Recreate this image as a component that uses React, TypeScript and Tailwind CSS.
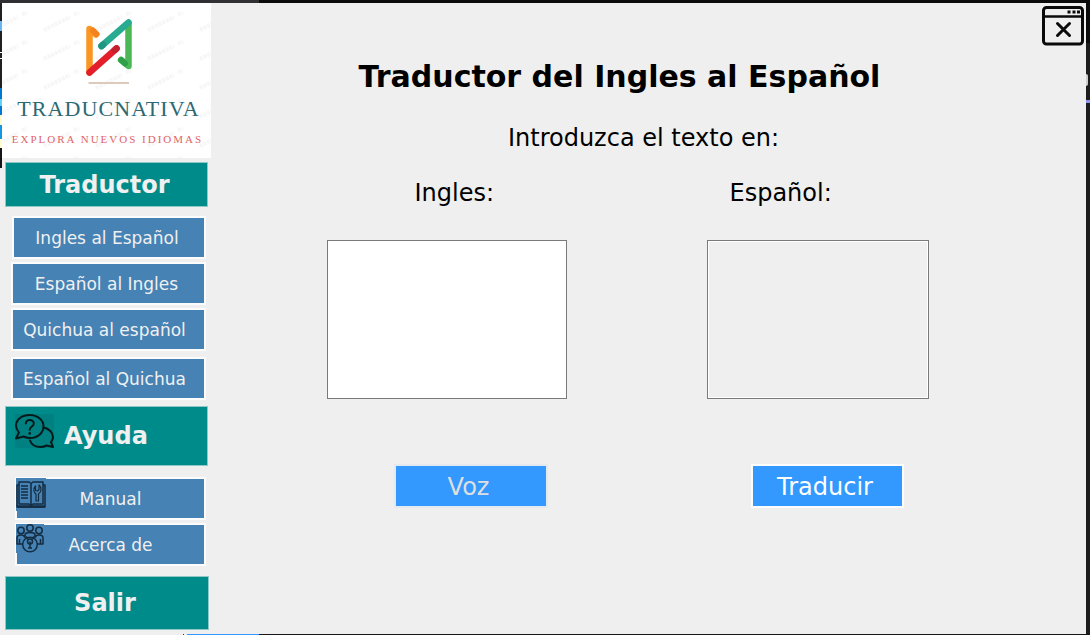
import React, { useState } from "react";

function BrandMark() {
  return (
    <svg viewBox="0 0 50 68" className="ml-[3px] h-[68px] w-[50px]" fill="none" strokeLinecap="round" strokeLinejoin="round" aria-hidden="true">
      <path d="M6.500 54.500V11L13 16.500" stroke="#fa9622" strokeWidth="6.500" />
      <path d="M10 12.500L13.500 16" stroke="#f5821f" strokeWidth="6" />
      <path d="M45.500 6V48L38 42" stroke="#4cb855" strokeWidth="6.500" />
      <path d="M38.500 42L42 45.500" stroke="#2fa049" strokeWidth="6" />
      <path d="M18.500 28L45.500 4.500" stroke="#29ab91" strokeWidth="6.500" />
      <path d="M18.500 28L20 26.700" stroke="#219680" strokeWidth="6.500" />
      <path d="M6.500 54.500L33.500 30.500" stroke="#e21f2b" strokeWidth="6.500" />
      <path d="M32 31.900L33.500 30.500" stroke="#c4202e" strokeWidth="6.500" />
      <path d="M5.500 65H46" stroke="#dccabd" strokeWidth="2" strokeLinecap="butt" />
    </svg>
  );
}

function Watermark() {
  return (
    <svg className="absolute inset-0 h-full w-full" aria-hidden="true">
      <defs>
        <pattern id="wm" width="52" height="29" patternUnits="userSpaceOnUse" x="38" y="4">
          <path d="M4 23L30 10M34 7l5-1" stroke="#000" strokeOpacity="0.03" strokeWidth="4" strokeDasharray="3 1" />
        </pattern>
      </defs>
      <rect width="100%" height="100%" fill="url(#wm)" />
    </svg>
  );
}

function HelpIcon() {
  return (
    <svg viewBox="0 0 39 34" className="h-[34px] w-[39px] shrink-0 bg-[#008080]" fill="none" stroke="#06191a" strokeWidth="2" strokeLinecap="round" strokeLinejoin="round" aria-hidden="true">
      <path d="M4 18.500C2 16 1 14 1 11.800C1 5.500 7 1 14.700 1S28.500 6 28.500 12.500S22.500 24 15 24C12.500 24 10.500 23.500 8.500 22.500L1 24.500Z" />
      <path d="M28.500 13.500C34 14.500 38 18.500 38 23C38 25 37.200 26.700 36 28.200L38 33L31.500 31.500C29.500 32.600 27.500 33 25.500 33C20.500 33 16.500 30.500 15 26.500" />
      <path d="M10.800 9.500C10.800 7.500 12.500 6 14.700 6C17 6 18.800 7.500 18.800 9.700C18.800 12.500 14.700 12.500 14.700 15.800" />
      <path d="M14.700 19.300V19.500" strokeWidth="2.500" />
    </svg>
  );
}

function ManualIcon() {
  return (
    <svg viewBox="0 0 30 33" className="h-[33px] w-[30px] bg-[#4682b4]" fill="none" stroke="#142d42" strokeWidth="1.500" strokeLinejoin="round" aria-hidden="true">
      <path d="M3 4H13L15 5.500L17 4H27V26H17L15 27.500L13 26H3ZM15 5.500V27" />
      <path d="M3 7H1V29H29V7H27" />
      <path d="M1 28.500H29" strokeWidth="2.500" />
      <path d="M5 8H12M5 11H12M5 14H12M5 17H12M5 20H12" />
      <path d="M20 23V16C17.500 14.500 17 11 19.500 8V12.500L21.500 13L23 11.500V7C26 9.500 25.500 14 22.500 16V23Z" strokeWidth="1.200" />
    </svg>
  );
}

function AboutIcon() {
  return (
    <svg viewBox="0 0 28 29" className="h-[29px] w-[28px] bg-[#4682b4]" fill="none" stroke="#142d42" strokeWidth="1.500" strokeLinejoin="round" aria-hidden="true">
      <circle cx="14" cy="4" r="3.200" />
      <circle cx="5" cy="6.500" r="3.200" />
      <circle cx="23" cy="6.500" r="3.200" />
      <path d="M9 14V11Q9 8.500 14 8.500T19 11V14M7 20H1V14Q1 11 5 11Q8 11 8.500 13M21 20H27V14Q27 11 23 11Q20 11 19.500 13M3.500 15V20M24.500 15V20" />
      <circle cx="14" cy="20.500" r="7.300" />
      <circle cx="14" cy="17.500" r="2.500" />
      <path d="M14 17.500V24M10 12.500L12 15M18 12.500L16 15M12 24H16" />
    </svg>
  );
}

function CloseWindowIcon() {
  return (
    <svg viewBox="0 0 42 40" className="h-10 w-[42px]" fill="none" stroke="#0a0a0a" aria-hidden="true">
      <rect x="1.500" y="1.500" width="39" height="36.500" rx="3" strokeWidth="3" />
      <path d="M1 10.500H41" strokeWidth="2.500" />
      <path d="M25.500 6H28.500M30.500 6H33.500M35 6H38" strokeWidth="3" />
      <path d="M15.500 17.500L27.500 29.500M27.500 17.500L15.500 29.500" strokeWidth="3" strokeLinecap="round" />
    </svg>
  );
}

const heading = "border border-[#8fc8c6] bg-[#008b8b] text-[24px] font-bold text-[#f0f0f0]";
const item = "relative h-[43px] border-2 border-[#fcfcfc] bg-[#4682b4] pt-0.5 text-[17px] text-[#f0f0f0]";

function Sidebar({ onPick }: { onPick: (name: string) => void }) {
  return (
    <aside className="flex w-[209px] shrink-0 flex-col">
      <div className="relative flex h-[155px] flex-col items-center bg-white font-['Liberation_Serif',serif]">
        <Watermark />
        <div className="relative mt-[15px] flex flex-col items-center">
          <BrandMark />
          <p className="mt-[9px] ml-1 text-[22px] leading-[28px] tracking-wider whitespace-nowrap text-[#2b6a74]">TRADUCNATIVA</p>
          <p className="mt-2 ml-0.5 text-[11px] leading-[16px] tracking-[2px] whitespace-nowrap text-[#df6468]">EXPLORA NUEVOS IDIOMAS</p>
        </div>
      </div>
      <nav className="flex flex-col pr-0.5 pl-[3px]" aria-label="Menú">
        <h2 className={`mt-1 mr-px h-[45px] pr-1 text-center leading-[45px] ${heading}`}>Traductor</h2>
        <div className="mt-[9px] flex flex-col gap-[3px] pr-[3px] pl-1.5">
          <button type="button" onClick={() => onPick("Ingles al Español")} className={`ml-px pr-1 ${item}`}>Ingles al Español</button>
          <button type="button" onClick={() => onPick("Español al Ingles")} className={`pr-1 ${item}`}>Español al Ingles</button>
          <button type="button" onClick={() => onPick("Quichua al español")} className={`pr-2 ${item}`}>Quichua al español</button>
          <button type="button" onClick={() => onPick("Español al Quichua")} className={`mt-[3px] pr-2 ${item}`}>Español al Quichua</button>
        </div>
        <h2 className={`mt-1.5 mr-px flex h-[60px] items-center gap-2.5 pl-[9px] ${heading}`}>
          <span className="pb-2.5"><HelpIcon /></span>
          Ayuda
        </h2>
        <div className="mt-[11px] flex flex-col gap-[3px] pr-[3px] pl-2.5">
          <button type="button" className={item}>
            <span className="absolute -top-px -left-px"><ManualIcon /></span>
            Manual
          </button>
          <button type="button" className={item}>
            <span className="absolute -top-px -left-px"><AboutIcon /></span>
            Acerca de
          </button>
        </div>
        <button type="button" className={`mt-2.5 h-[54px] pr-1 ${heading}`}>Salir</button>
      </nav>
    </aside>
  );
}

export default function App() {
  const [text, setText] = useState("");
  const [result, setResult] = useState("");
  const [pair, setPair] = useState("Ingles al Español");
  const [from, to] = pair.split(" al ");
  const action = "h-11 border-2 text-[24px] leading-[42px] bg-[#3399ff]";

  return (
    <div className="flex min-h-screen flex-col bg-[#efefef] font-['DejaVu_Sans',Verdana,sans-serif] text-black">
      <div className="flex h-[3px] bg-[#0b0b0b]">
        <div className="w-[259px] bg-[#303033]" />
      </div>
      <div className="flex grow">
        <div className="flex w-0.5 shrink-0 flex-col">
          <div className="h-[18px] bg-[#202023]" />
          <div className="h-2.5 bg-[#68b5f6]" />
          <div className="h-[21px] bg-[#202023]" />
          <div className="h-px bg-white" />
          <div className="h-[5px] bg-[#202023]" />
          <div className="h-px bg-white" />
          <div className="h-[29px] bg-[#202023]" />
          <div className="h-[11px] bg-[#0078d4]" />
          <div className="h-[7px] bg-[#61d1f7]" />
          <div className="h-[9px] bg-[#0078d4]" />
          <div className="h-[10px] bg-[#fffccc]" />
          <div className="h-[14px] bg-[#1398df]" />
          <div className="h-[9px] bg-[#fffccc]" />
          <div className="h-5 bg-[#151515]" />
        </div>
        <Sidebar onPick={setPair} />
        <main className="flex min-w-0 grow flex-col">
          <div className="flex justify-end pt-[3px] pr-0.5">
            <button type="button" aria-label="Cerrar"><CloseWindowIcon /></button>
          </div>
          <h1 className="mt-3 pr-[58px] text-center text-[30px] leading-[38px] font-bold">Traductor del {from} al {to}</h1>
          <p className="mt-[26px] pr-2.5 text-center text-[24px] leading-8">Introduzca el texto en:</p>
          <div className="flex justify-center gap-[140px] pr-[42px]">
            <div className="flex w-60 flex-col items-start">
              <label htmlFor="source" className="mt-[23px] ml-[88px] text-[24px] leading-8">{from}:</label>
              <textarea id="source" value={text} onChange={(e) => setText(e.target.value)} className="mt-[31px] block h-[159px] w-full resize-none border border-[#7a7a7a] bg-white p-1" />
              <button type="button" disabled className={`mt-[65px] ml-[67px] w-[154px] border-[#e2e9ef] pr-1 text-[#dfdfdf] ${action}`}>Voz</button>
            </div>
            <div className="flex w-[222px] flex-col items-start">
              <label htmlFor="target" className="mt-[23px] ml-[23px] text-[24px] leading-8">{to}:</label>
              <textarea id="target" readOnly value={result} className="mt-[31px] block h-[159px] w-full resize-none border border-[#7a7a7a] bg-[#efefef] p-1 shadow-[inset_0_0_0_1px_#ffffff]" />
              <button type="button" onClick={() => setResult(text)} className={`mt-[65px] ml-11 w-[153px] border-[#fcfcfc] pr-1 text-white ${action}`}>Traducir</button>
            </div>
          </div>
        </main>
        <div className="flex w-1 shrink-0 flex-col bg-[#1c1d1e]">
          <div className="h-10 bg-[#0b0b0b]" />
          <div className="mt-[31px] h-3 w-0.5 rounded-r-full bg-[#cfcfcf]" />
          <div className="mt-[14px] h-[3px] bg-[#8b93f0]" />
        </div>
      </div>
      <div className="flex h-px">
        <div className="w-[183px]" />
        <div className="w-px bg-[#333333]" />
        <div className="w-[3px]" />
        <div className="w-[72px] bg-[#3399ff]" />
        <div className="grow bg-[#161616]" />
      </div>
    </div>
  );
}
